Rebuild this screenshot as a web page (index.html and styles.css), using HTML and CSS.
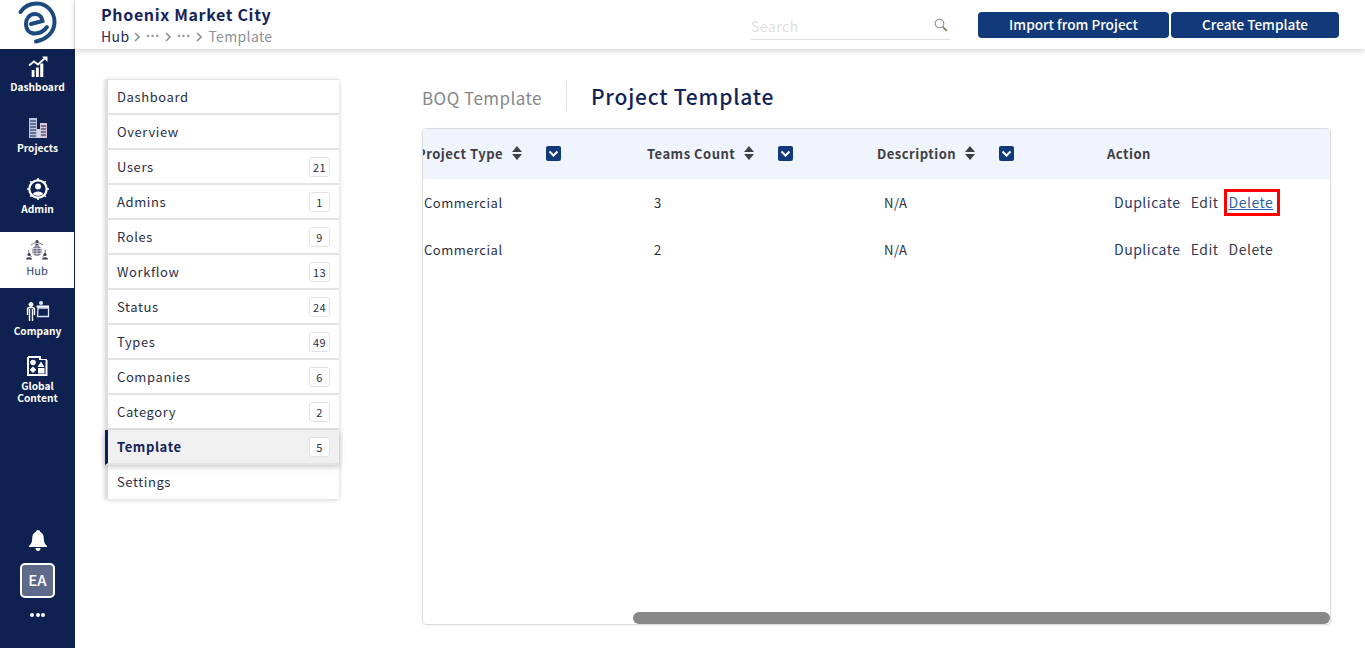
FILE: index.html
```html
<!DOCTYPE html>
<html lang="en">
<head>
<meta charset="utf-8">
<title>Project Template</title>
<link rel="stylesheet" href="styles.css">
</head>
<body>
<div class="app">
  <aside class="rail">
    <div class="logo">
      <svg width="46" height="46" viewBox="0 0 46 46" fill="none" stroke="#1d4a7e" stroke-width="4" stroke-linecap="round"><path d="M6.500 12 C10.500 6 17 3.500 23 3.500 C33 3.500 40.500 12 40.500 22 C40.500 32 33 39 22 41.500"/><path d="M17 24 L28.500 21 C28 17 25 14 21 14 C15 14 12 19 12 24 C12 30 16 33.500 21 33.500 C26 33.500 30 31 33 27"/></svg>
    </div>
    <nav class="rail-nav">
      <a class="rail-item">
        <svg class="rail-icon" width="20" height="22" viewBox="0 0 20 22" fill="#fff"><path d="M1 9.500 L6 5.500 L10 8.500 L16.500 2.500" fill="none" stroke="#fff" stroke-width="1.800"/><path d="M14 .5h5.500v5.500z"/><rect x="3.700" y="14" width="2.800" height="7"/><rect x="8" y="11.500" width="2.800" height="9.500"/><rect x="12.200" y="7.500" width="3.100" height="13.500"/></svg>
        <span>Dashboard</span>
      </a>
      <a class="rail-item">
        <svg class="rail-icon" width="20" height="22" viewBox="0 0 20 22" fill="#cfd8e6"><rect x="1" y="1" width="8" height="20" fill="#b9c6da"/><rect x="9" y="12" width="3" height="9"/><rect x="12" y="6" width="7" height="15" fill="#d9c6d8"/><path d="M2 4h6M2 7h6M2 10h6M2 13h6M2 16h6M2 19h6M13 9h5M13 12h5M13 15h5M13 18h5" stroke="#10214f" stroke-width="1"/></svg>
        <span>Projects</span>
      </a>
      <a class="rail-item">
        <svg class="rail-icon" width="22" height="22" viewBox="0 0 22 22" fill="#fff"><circle cx="11" cy="11" r="8.700" fill="none" stroke="#fff" stroke-width="2.200"/><circle cx="11" cy="8.500" r="3"/><path d="M5.800 16 C7 12.600 15 12.600 16.200 16 C14 18.400 8 18.400 5.800 16z"/><path d="M11 0v3M11 19v3M0 11h3M19 11h3M3.200 3.200l2 2M16.800 16.800l2 2M18.800 3.200l-2 2M5.200 16.800l-2 2" stroke="#fff" stroke-width="1.600"/></svg>
        <span>Admin</span>
      </a>
      <a class="rail-item active">
        <svg class="rail-icon" width="22" height="22" viewBox="0 0 22 22" fill="#34384f"><path d="M5 6a9 9 0 0 1 12 0M2.500 11a9 9 0 0 0 3 7M19.500 11a9 9 0 0 1-3 7" fill="none" stroke="#777" stroke-width="1"/><circle cx="11" cy="12" r="5" fill="#6f6a86"/><path d="M6 12h10M11 7v10M8 8.500c-1.500 2-1.500 5 0 7M14 8.500c1.500 2 1.500 5 0 7M7 9.500h8M7 14.500h8" stroke="#fff" stroke-width=".6" fill="none"/><circle cx="11" cy="2.500" r="1.500"/><path d="M9 6.500c0-2 4-2 4 0z"/><circle cx="3" cy="15.500" r="1.500"/><path d="M0 20.500c0-3 6-3 6 0z"/><circle cx="19" cy="15.500" r="1.500"/><path d="M16 20.500c0-3 6-3 6 0z"/></svg>
        <span>Hub</span>
      </a>
      <a class="rail-item">
        <svg class="rail-icon" width="24" height="22" viewBox="0 0 24 22" fill="none" stroke="#fff"><circle cx="5" cy="4.500" r="2" fill="#fff"/><path d="M1.500 15V9.500q0-2 2-2h3q2 0 2 2V15M3.500 9v12M6.500 9v12" stroke-width="1.400"/><circle cx="15" cy="3" r="2" fill="#d7e6f5" stroke="none"/><path d="M12 8h10.500v8.500H11.500z" stroke="#dbe8f5" stroke-width="1.300"/><path d="M10.500 6.500h12.500" stroke="#fff" stroke-width="2"/></svg>
        <span>Company</span>
      </a>
      <a class="rail-item tall">
        <svg class="rail-icon" width="21" height="20" viewBox="0 0 21 20" fill="none"><path d="M1 1h12v3M19.500 4v15H1V1" stroke="#fff" stroke-width="2"/><path d="M13 3.500h7" stroke="#fff" stroke-width="1"/><circle cx="6" cy="6.500" r="2.800" fill="#fff"/><path d="M6 10.500l3.300 3.300-3.300 3.300-3.300-3.300z" fill="#fff"/><path d="M14 5.500l3.500 5.500h-7z" fill="#fff"/><rect x="11" y="12" width="6.500" height="5.500" fill="#fff"/></svg>
        <span>Global<br>Content</span>
      </a>
    </nav>
    <div class="rail-foot">
      <svg class="bell" width="18" height="21" viewBox="0 0 18 21" fill="#fff"><path d="M9 0c1.200 0 2 .8 2 1.800C14 3 14.800 5.500 14.800 9c0 3 1 5 3.200 7v1H0v-1c2.200-2 3.200-4 3.200-7C3.200 5.500 4 3 7 1.800 7 .8 7.800 0 9 0z"/><path d="M6.500 18h5c0 2-1 3-2.500 3s-2.500-1-2.500-3z"/></svg>
      <div class="avatar">EA</div>
      <div class="dots"><i></i><i></i><i></i></div>
    </div>
  </aside>

  <div class="main">
    <header class="topbar">
      <div class="crumbs">
        <h1>Phoenix Market City</h1>
        <div class="path">
          <span class="hub">Hub</span>
          <svg class="chev" width="6" height="10" viewBox="0 0 6 10"><path d="M1 1l4 4-4 4" fill="none" stroke="#8e9196" stroke-width="1.600"/></svg>
          <span class="more">···</span>
          <svg class="chev" width="6" height="10" viewBox="0 0 6 10"><path d="M1 1l4 4-4 4" fill="none" stroke="#8e9196" stroke-width="1.600"/></svg>
          <span class="more">···</span>
          <svg class="chev" width="6" height="10" viewBox="0 0 6 10"><path d="M1 1l4 4-4 4" fill="none" stroke="#8e9196" stroke-width="1.600"/></svg>
          <span class="leaf">Template</span>
        </div>
      </div>
      <div class="search">
        <span>Search</span>
        <svg width="14" height="14" viewBox="0 0 14 14" fill="none"><circle cx="5.500" cy="5.500" r="4.300" stroke="#8a8f96" stroke-width="1.100"/><path d="M8.800 8.800l4 4" stroke="#8a7a55" stroke-width="1.800"/></svg>
      </div>
      <div class="actions">
        <button class="btn wide">Import from Project</button>
        <button class="btn">Create Template</button>
      </div>
    </header>

    <div class="content">
      <ul class="menu">
        <li>Dashboard</li>
        <li>Overview</li>
        <li>Users<em>21</em></li>
        <li>Admins<em>1</em></li>
        <li>Roles<em>9</em></li>
        <li>Workflow<em>13</em></li>
        <li>Status<em>24</em></li>
        <li>Types<em>49</em></li>
        <li>Companies<em>6</em></li>
        <li>Category<em>2</em></li>
        <li class="current">Template<em>5</em></li>
        <li>Settings</li>
      </ul>

      <section class="panel">
        <div class="tabs">
          <span class="tab">BOQ Template</span>
          <span class="tab on">Project Template</span>
        </div>
        <div class="card">
          <div class="grid head">
            <div class="th">Project Type<svg class="sort" width="10" height="14" viewBox="0 0 10 14"><path d="M5 0l5 6H0zM5 14L0 8h10z"/></svg><svg class="pick" width="15" height="15" viewBox="0 0 15 15"><rect width="15" height="15" rx="2" fill="#123a7a"/><path d="M3.500 5.500l4 4 4-4" stroke="#fff" stroke-width="2" fill="none"/></svg></div>
            <div class="th">Teams Count<svg class="sort" width="10" height="14" viewBox="0 0 10 14"><path d="M5 0l5 6H0zM5 14L0 8h10z"/></svg><svg class="pick" width="15" height="15" viewBox="0 0 15 15"><rect width="15" height="15" rx="2" fill="#123a7a"/><path d="M3.500 5.500l4 4 4-4" stroke="#fff" stroke-width="2" fill="none"/></svg></div>
            <div class="th">Description<svg class="sort" width="10" height="14" viewBox="0 0 10 14"><path d="M5 0l5 6H0zM5 14L0 8h10z"/></svg><svg class="pick" width="15" height="15" viewBox="0 0 15 15"><rect width="15" height="15" rx="2" fill="#123a7a"/><path d="M3.500 5.500l4 4 4-4" stroke="#fff" stroke-width="2" fill="none"/></svg></div>
            <div class="th">Action</div>
          </div>
          <div class="grid row">
            <div class="td">Commercial</div>
            <div class="td">3</div>
            <div class="td">N/A</div>
            <div class="td links"><a>Duplicate</a><a class="edit">Edit</a><a class="focus">Delete</a></div>
          </div>
          <div class="grid row">
            <div class="td">Commercial</div>
            <div class="td">2</div>
            <div class="td">N/A</div>
            <div class="td links"><a>Duplicate</a><a class="edit">Edit</a><a class="del">Delete</a></div>
          </div>
          <div class="thumb"></div>
        </div>
      </section>
    </div>
  </div>
</div>
</body>
</html>
```
FILE: styles.css
```css
* { box-sizing: border-box; }
html, body { margin: 0; height: 100%; overflow: hidden; background: #fff; }
body { font-family: "Noto Sans CJK JP", "Noto Sans", sans-serif; color: #2a2f45; }
.app { display: flex; height: 648px; }

.rail { width: 75px; flex: none; background: #0f2150; display: flex; flex-direction: column; }
.logo { height: 49px; background: #fff; border-right: 1px solid #e6e6e6; padding-left: 14px; }
.logo svg { display: block; }
.rail-nav { display: flex; flex-direction: column; gap: 5px; }
.rail-item { height: 56px; padding-top: 7px; display: flex; flex-direction: column; align-items: center; color: #fff; font-size: 10.200px; line-height: 12px; font-weight: 700; text-align: center; }
.rail-item.active { background: #fff; color: #2f3a66; font-weight: 400; font-size: 11px; margin-right: 1px; }
.rail-item.tall { height: 60px; padding-top: 2px; }
.rail-icon { display: block; margin-bottom: 3px; flex: none; }
.tall .rail-icon { margin-bottom: 4px; }
.rail-foot { margin-top: auto; padding-bottom: 31px; display: flex; flex-direction: column; align-items: center; }
.bell { display: block; }
.avatar { width: 35px; height: 35px; margin-top: 12px; border: 2px solid #fff; border-radius: 5px; background: #5f6a8a; color: #fff; font-size: 15px; font-weight: 500; line-height: 30px; text-align: center; }
.dots { display: flex; gap: 1.500px; margin-top: 15px; }
.dots i { width: 4px; height: 4px; border-radius: 50%; background: #fff; }

.main { flex: 1; min-width: 0; display: flex; flex-direction: column; }
.topbar { height: 49px; flex: none; display: flex; align-items: center; padding: 0 26px; box-shadow: 0 2px 6px rgba(0,0,0,.18); position: relative; }
.crumbs { width: 650px; }
h1 { margin: 0; font-size: 16px; line-height: 20px; font-weight: 700; letter-spacing: .65px; color: #13235a; }
.path { display: flex; align-items: center; gap: 5px; font-size: 14px; line-height: 18px; letter-spacing: .35px; color: #8e9196; margin-top: 3px; }
.path .hub { color: #1f2b4f; }
.chev { display: block; margin-top: 1px; }
.more { font-family: "Liberation Sans", sans-serif; font-weight: 700; letter-spacing: 0; width: 15px; text-align: center; }
.leaf { margin-left: 1px; }
.search { width: 200px; height: 27px; border-bottom: 1px solid #e1e1e1; display: flex; align-items: center; justify-content: space-between; padding-right: 3px; color: #e0e0e0; font-size: 14px; letter-spacing: .5px; margin-top: 4px; }
.search svg { margin-top: -3px; }
.actions { display: flex; gap: 2px; margin-left: 27px; }
.btn { height: 26px; width: 168px; padding: 0; border: 0; border-radius: 4px; background: #123a7a; color: #fff; font: 500 13.600px/1 "Noto Sans CJK JP", sans-serif; }
.btn.wide { width: 191px; }

.content { flex: 1; display: flex; align-items: flex-start; padding: 30px 34px 0 30px; min-height: 0; }
.menu { list-style: none; margin: 0; padding: 0; width: 234px; flex: none; border-left: 3px solid #e0e0e0; border-top: 1px solid #e4e4e4; box-shadow: 0 1px 5px rgba(0,0,0,.18); background: #fff; }
.menu li { height: 35px; display: flex; align-items: center; justify-content: space-between; padding: 0 9px 0 9px; font-size: 13px; letter-spacing: .6px; border-bottom: 2px solid #e4e4e4; color: #2a2f45; }
.menu li:last-child { border-bottom: 0; height: 34px; padding-bottom: 2px; }
.menu em { min-width: 21px; height: 20px; padding: 0 3px; border: 1px solid #e2e2e2; border-radius: 3px; font-style: normal; font-weight: 400; font-size: 11px; line-height: 18px; text-align: center; letter-spacing: .3px; background: #fff; color: #2a2f45; }
.menu .current { background: #f0f0f0; font-weight: 700; color: #13235a; box-shadow: 0 2px 6px rgba(0,0,0,.22); position: relative; margin-left: -3px; padding-left: 9px; border-left: 3px solid #0f2150; }

.panel { flex: 1; margin-left: 83px; min-width: 0; display: flex; flex-direction: column; }
.tabs { display: flex; align-items: center; height: 34px; }
.tab { font-size: 17px; letter-spacing: .45px; color: #85878c; padding: 3px 24px 0 0; border-right: 1px solid #e0e0e0; line-height: 27px; }
.tab.on { border: 0; padding: 0 0 0 24px; font-size: 21px; letter-spacing: .8px; font-weight: 500; color: #13235a; }
.card { position: relative; margin-top: 15px; height: 497px; overflow: hidden; border: 1px solid #dcdcdc; border-radius: 4px; box-shadow: 0 1px 3px rgba(0,0,0,.06); }
.grid { display: grid; grid-template-columns: repeat(4, 230px); margin-left: -6px; width: 930px; }
.head { height: 50px; padding-bottom: 2px; background: #f0f4fc; align-items: center; width: calc(100% + 6px); }
.th { display: flex; align-items: center; font-size: 13px; font-weight: 700; letter-spacing: .5px; color: #3f3f46; white-space: nowrap; }
.sort { margin-left: 9px; fill: #3f3f46; }
.pick { margin-left: 24px; }
.row { height: 47px; align-items: center; }
.td { padding-left: 7px; font-size: 13px; letter-spacing: .5px; line-height: 17px; color: #2a2f45; padding-bottom: 1px; }
.links { display: flex; gap: 10px; font-size: 14px; letter-spacing: .5px; color: #2c3a66; white-space: nowrap; }
.edit, .del { color: #3a3a4a; }
.focus { color: #2a62b0; text-decoration: underline; outline: 3px solid #f00; outline-offset: 2px; padding-right: 2px; margin-right: -2px; }
.thumb { position: absolute; right: 0; bottom: 0; width: 697px; height: 12px; border-radius: 6px; background: #888; }
```
